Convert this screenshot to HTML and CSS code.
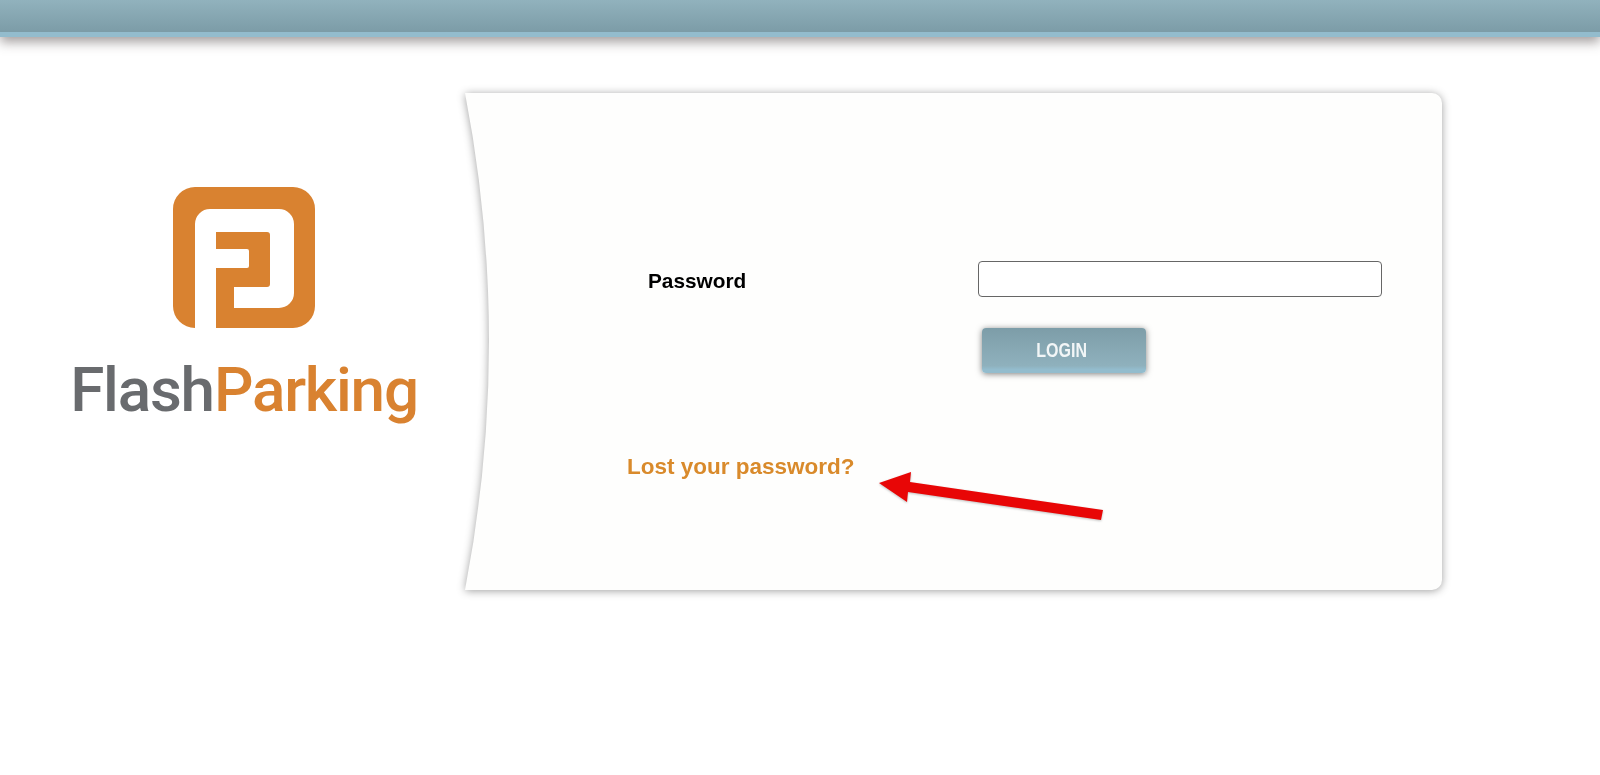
FILE: index.html
```html
<!DOCTYPE html>
<html lang="en">
<head>
    <meta charset="UTF-8">
    <meta name="viewport" content="width=device-width, initial-scale=1.0">
    <title>FlashParking Login</title>
    <link rel="stylesheet" href="styles.css">
</head>
<body>

<header class="top-bar"></header>

<main class="page">
    <div class="brand">
        <svg class="brand-icon" viewBox="0 0 142 141" width="142" height="141">
            <path fill="#d98230" fill-rule="evenodd" d="M22 0H120a22 22 0 0 1 22 22V119a22 22 0 0 1-22 22H22a22 22 0 0 1-22-22V22A22 22 0 0 1 22 0ZM22 141V37a15 15 0 0 1 15-15H106a15 15 0 0 1 15 15V106a15 15 0 0 1-15 15H61V100H94a3 3 0 0 0 3-3V48a3 3 0 0 0-3-3H43V62H74a2 2 0 0 1 2 2V79a2 2 0 0 1-2 2H43V141Z"/>
        </svg>
        <div class="brand-name">Flash<span class="brand-accent">Parking</span></div>
    </div>

    <div class="panel-shadow">
        <section class="panel">
            <form class="login-form" onsubmit="return false">
                <label class="field-label" for="password">Password</label>
                <input class="field-input" type="password" id="password" name="password">
                <button class="login-button" type="submit"><span class="login-text">LOGIN</span></button>
            </form>
            <a class="lost-link" href="#">Lost your password?</a>

            <!-- annotation arrow over the panel -->
            <svg class="arrow" viewBox="0 0 226 50" width="226" height="50">
                <path fill="#e80606" d="M2 13L34 2L33 12L226 40L224 50L31 22L30 32Z"/>
            </svg>
        </section>
    </div>
</main>

</body>
</html>
```

FILE: styles.css
```css
html, body {
    height: 100%;
}

body {
    margin: 0;
    padding: 0;
    background-color: #fff;
    font-family: 'Liberation Sans', Arial, sans-serif;
    overflow: hidden;
}

/* Top bar */
.top-bar {
    height: 32px;
    background: linear-gradient(to bottom, #91b2bd, #7c9ca7);
    border-bottom: 5px solid #93bccd;
    box-shadow: 0 5px 12px rgba(70, 60, 60, 0.5);
}

.page {
    display: flex;
    align-items: flex-start;
    margin-top: 56px;
}

/* Logo column */
.brand {
    width: 465px;
    display: flex;
    flex-direction: column;
    align-items: center;
    padding-top: 94px;
    flex-shrink: 0;
}

.brand-icon {
    display: block;
    margin-left: 23px;
}

.brand-name {
    margin-top: 22px;
    margin-left: 23px;
    font-family: 'Roboto', sans-serif;
    font-size: 62px;
    font-weight: 500;
    line-height: 80px;
    letter-spacing: -1.2px;
    color: #696b6e;
    white-space: nowrap;
}

.brand-accent {
    color: #d98230;
}

/* Login panel */
.panel-shadow {
    filter: drop-shadow(0 1px 4px rgba(0, 0, 0, 0.38));
}

.panel {
    position: relative;
    width: 977px;
    height: 497px;
    padding: 168px 0 0 162px;
    box-sizing: border-box;
    background-color: #fefefd;
    clip-path: path('M0 0H967a10 10 0 0 1 10 10V487a10 10 0 0 1-10 10H0Q48 248 0 0Z');
}

.login-form {
    display: grid;
    grid-template-columns: 330px 404px;
    margin-left: 21px;
    align-items: center;
}

.field-label {
    position: relative;
    top: 2px;
    font-size: 20.8px;
    font-weight: bold;
    color: #000;
}

.field-input {
    height: 36px;
    width: 404px;
    padding: 0 8px;
    box-sizing: border-box;
    background-color: #fff;
    border: 1px solid #666;
    border-radius: 4px;
}

.login-button {
    grid-column: 2;
    width: 164px;
    height: 45px;
    margin: 31px 0 0 4px;
    padding: 2px 0 0;
    border: none;
    border-radius: 4px;
    background: linear-gradient(to bottom, #7d9da8, #8fb1bd 84%, #93bccd 92%, #93bccd);
    box-shadow: 0 1px 6px rgba(0, 0, 0, 0.5);
    color: #f2f6f7;
    font-family: 'Liberation Sans', sans-serif;
    font-size: 20px;
    font-weight: bold;
    cursor: pointer;
}

.login-text {
    display: inline-block;
    position: relative;
    left: -2px;
    top: -1px;
    transform: scaleX(0.8);
}

.lost-link {
    display: block;
    margin-top: 81px;
    font-size: 22.5px;
    line-height: 26px;
    font-weight: bold;
    color: #d98a2b;
    text-decoration: none;
}

.arrow {
    position: absolute;
    left: 412px;
    top: 377px;
    filter: drop-shadow(0 1px 1px rgba(0, 0, 0, 0.25));
}
```
